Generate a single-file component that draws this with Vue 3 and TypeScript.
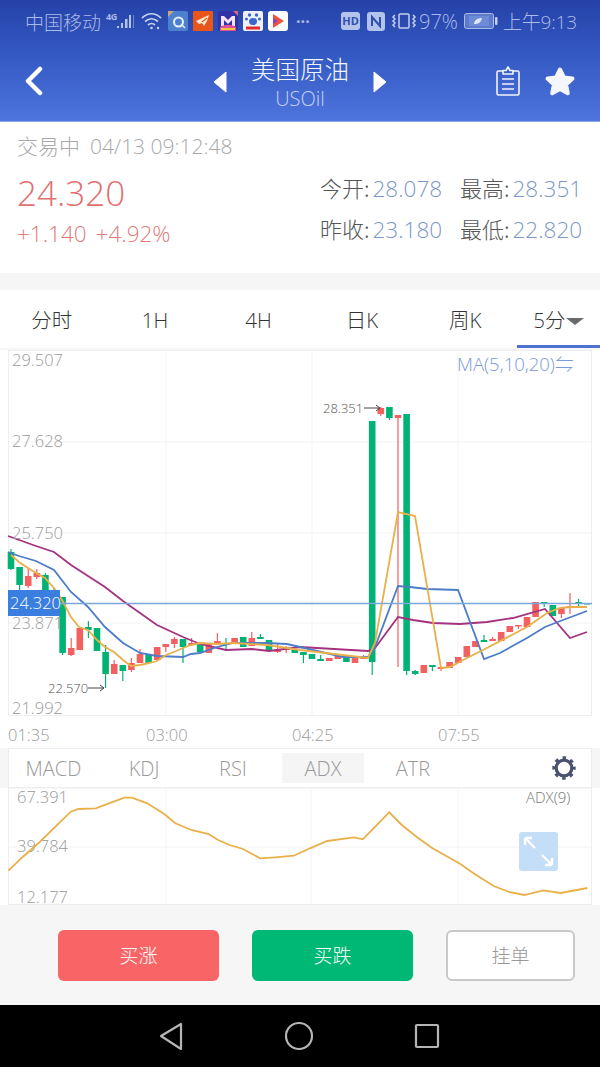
<script setup lang="ts">
type Pt = [number, number];
type Candle = { up: boolean; top: number; bottom: number; high: number; low: number };

// [up, body top, body bottom, wick high, wick low] traced from the chart
const raw: [number, number, number, number, number][] = [
  [0, 552, 569, 549, 570], [0, 567, 585, 567, 590], [1, 576, 586, 568, 588], [1, 573, 577, 569, 579],
  [0, 575, 592, 573, 594], [0, 590, 607, 588, 607], [0, 597, 653, 597, 655], [1, 648, 655, 638, 656],
  [1, 628, 650, 628, 650], [0, 627, 630, 621, 638], [0, 628, 651, 628, 651], [0, 652, 674, 645, 688],
  [1, 664, 674, 660, 674], [0, 665, 671, 665, 681], [1, 663, 670, 658, 672], [1, 654, 663, 649, 663],
  [0, 654, 663, 654, 663], [1, 647, 660, 647, 660], [1, 644, 647, 644, 652], [1, 639, 644, 637, 648],
  [0, 639, 647, 639, 663], [1, 643, 645, 638, 646], [0, 643, 652, 643, 652], [1, 643, 653, 643, 653],
  [1, 641, 643, 633, 644], [0, 643, 645, 638, 649], [1, 638, 644, 638, 644], [0, 637, 647, 637, 647],
  [1, 638, 646, 632, 646], [0, 637, 639, 634, 639], [0, 640, 651, 640, 651], [1, 650, 652, 643, 653],
  [1, 648, 650, 646, 653], [0, 649, 653, 649, 653],
  [0, 652, 655, 652, 663], [0, 654, 659, 654, 659], [0, 659, 661, 655, 661], [1, 658, 661, 658, 661],
  [1, 656, 659, 656, 659], [0, 656, 662, 656, 662], [1, 658, 663, 658, 663], [1, 657, 659, 655, 659],
  [0, 421, 662, 421, 675], [1, 408, 414, 407, 416], [0, 407, 418, 407, 420], [1, 415, 418, 415, 667],
  [0, 414, 671, 414, 675], [0, 671, 674, 670, 675], [1, 665, 673, 665, 673], [0, 665, 667, 665, 671],
  [1, 667, 669, 666, 671], [1, 662, 668, 662, 668], [1, 657, 663, 657, 663], [1, 646, 657, 646, 657],
  [1, 641, 647, 641, 647], [0, 640, 642, 635, 642], [1, 639, 641, 637, 641], [1, 632, 641, 632, 641],
  [1, 626, 632, 626, 632], [1, 625, 626, 625, 629], [1, 617, 627, 617, 627], [1, 602, 617, 602, 617],
  [0, 602, 604, 602, 607], [0, 605, 616, 605, 616], [1, 608, 614, 608, 618], [1, 606, 608, 593, 614],
  [0, 602, 603, 599, 606], [0, 603, 604, 603, 604],
];

const candles: (Candle & { x: number })[] = raw.map(([up, top, bottom, high, low], i) => ({
  x: 11 + 8.6 * i,
  up: up === 1,
  top,
  bottom,
  high,
  low,
}));

const line = (pts: Pt[]) => pts.map(([x, y]) => `${x.toFixed(1)},${y.toFixed(1)}`).join(' ');

const ma5 = line([
  [11, 555], [19, 562], [28, 568], [36, 573], [45, 578], [54, 588], [62, 600], [71, 617], [79, 627], [88, 630],
  [97, 640], [105, 647], [114, 652], [123, 660], [131, 666], [140, 665], [149, 663], [157, 661], [166, 655],
  [174, 652], [183, 648], [191, 645], [200, 643], [217, 644], [233, 643], [267, 645], [300, 650], [368, 658],
  [375, 643], [398, 512], [415, 516], [441, 668], [450, 667], [467, 658], [483, 650], [527, 627], [547, 613],
  [560, 608], [570, 607], [587, 607],
]);
const ma10 = line([
  [8, 552], [19, 556], [36, 561], [54, 570], [71, 592], [88, 607], [105, 627], [123, 643], [140, 653], [157, 656],
  [183, 657], [191, 654], [200, 653], [217, 647], [233, 643], [267, 643], [287, 644], [300, 647], [343, 657],
  [368, 657], [375, 647], [398, 586], [410, 587], [427, 589], [458, 590], [484, 659], [500, 653], [527, 638],
  [545, 627], [563, 620], [587, 611],
]);
const ma20 = line([
  [8, 536], [36, 546], [54, 552], [71, 565], [105, 587], [123, 601], [140, 613], [157, 625], [183, 637], [200, 644],
  [226, 650], [252, 649], [269, 651], [300, 647], [368, 651], [375, 648], [398, 617], [413, 620], [433, 623],
  [460, 624], [487, 622], [513, 618], [545, 609], [570, 638], [587, 632],
]);

const adx = line(
  ([
    [22, 452], [60, 410], [100, 370], [140, 325], [185, 275], [205, 267], [250, 265], [290, 248], [325, 233],
    [345, 233], [385, 250], [430, 283], [458, 310], [500, 330], [545, 342], [570, 360], [600, 375], [635, 387],
    [680, 415], [720, 412], [768, 407], [810, 385], [855, 363], [925, 352], [948, 358], [1017, 277], [1050, 315],
    [1090, 352], [1130, 385], [1200, 430], [1240, 462], [1290, 498], [1330, 516], [1370, 525], [1420, 511],
    [1465, 519], [1535, 504],
  ] as Pt[]).map(([x, y]): Pt => [x / 2.613, 720 + y / 3]),
);

const priceScale = [
  { y: 366, label: '29.507' },
  { y: 447, label: '27.628' },
  { y: 539, label: '25.750' },
  { y: 629, label: '23.871' },
  { y: 714, label: '21.992' },
];
const timeScale = [
  { x: 8, label: '01:35' },
  { x: 146, label: '03:00' },
  { x: 292, label: '04:25' },
  { x: 438, label: '07:55' },
];
const tabs = ['分时', '1H', '4H', '日K', '周K'];
const indicators = [
  { name: 'MACD', width: 89 },
  { name: 'KDJ', width: 92 },
  { name: 'RSI', width: 86 },
  { name: 'ADX', width: 82, active: true },
  { name: 'ATR', width: 98 },
];
</script>

<template>
  <div class="page">
    <header class="top">
      <div class="status">
        <span class="carrier">中国移动</span>
        <span class="net">4G</span>
        <svg class="signal" width="18" height="20" viewBox="0 0 18 20">
          <g fill="#b4c3ec">
            <rect x="0" y="15" width="2" height="2" />
            <rect x="4" y="12" width="2" height="5" />
            <rect x="8" y="8" width="2.500" height="9" />
            <rect x="12" y="4" width="2" height="13" />
            <rect x="16" y="4" width="1" height="13" opacity=".5" />
          </g>
        </svg>
        <svg class="wifi" width="22" height="20" viewBox="0 0 22 20" fill="none" stroke="#c4d0f0" stroke-width="1.700">
          <path d="M1 7c6-5.500 13-5.500 19 0M4 10.500c4-3.500 9-3.500 13 0M7 14c2-1.800 5-1.800 7 0" />
          <circle cx="10.500" cy="17" r="1.300" fill="#c4d0f0" stroke="none" />
          <circle cx="17" cy="17" r="1.200" fill="#c4d0f0" stroke="none" />
        </svg>
        <svg class="app" width="20" height="20" viewBox="0 0 20 20">
          <rect width="20" height="20" rx="2" fill="#4d80cf" />
          <circle cx="10.500" cy="11" r="4.500" fill="none" stroke="#e6f2fb" stroke-width="2" />
          <path d="M13 13l4 4" stroke="#e6f2fb" stroke-width="1.500" />
          <path d="M0 0h6L0 6z" fill="#c9a77d" />
        </svg>
        <svg class="app" width="20" height="20" viewBox="0 0 20 20">
          <rect width="20" height="20" rx="1" fill="#e8561c" />
          <path d="M3 10l13-6-2 6-3 5-2-3-3 1z" fill="#fde9d6" />
          <path d="M9 11l5-4" stroke="#e8561c" stroke-width="1.200" />
        </svg>
        <svg class="app" width="20" height="20" viewBox="0 0 20 20">
          <rect width="20" height="20" rx="2" fill="#3232a8" />
          <path d="M3 15V5l3 0 4 4 4-4 3 0v10h-3V9l-4 4-4-4v6z" fill="#f4e4f4" />
          <path d="M2 16c5-3 11-3 16 0v4H2z" fill="#e0509c" />
          <rect x="3" y="17" width="14" height="2" fill="#f2c53d" />
          <path d="M15 0h5v5z" fill="#d06a8a" />
        </svg>
        <svg class="app" width="20" height="20" viewBox="0 0 20 20">
          <rect width="20" height="20" rx="2" fill="#eef1fb" />
          <g fill="#3a66d0">
            <circle cx="6.500" cy="4" r="1.700" /><circle cx="13.500" cy="4" r="1.700" />
            <circle cx="3.500" cy="8" r="1.500" /><circle cx="16.500" cy="8" r="1.500" />
            <ellipse cx="10" cy="10.500" rx="4" ry="3.500" />
          </g>
          <rect x="3" y="15.500" width="14" height="3" fill="#e02c2c" />
        </svg>
        <svg class="app" width="20" height="20" viewBox="0 0 20 20">
          <rect width="20" height="20" rx="3" fill="#fff" />
          <path d="M5 3l11 7-11 7z" fill="#f0533c" />
          <path d="M5 7l5 3-5 3z" fill="#8a3fd0" />
        </svg>
        <span class="dots">···</span>
        <span class="status-gap" />
        <span class="hd">HD</span>
        <svg class="nfc" width="18" height="19" viewBox="0 0 18 19">
          <rect width="18" height="19" rx="3" fill="#b4c3ec" />
          <path d="M5 14V5l8 9V5" fill="none" stroke="#2f4fb0" stroke-width="2" />
        </svg>
        <svg class="vibrate" width="26" height="18" viewBox="0 0 26 18" fill="none" stroke="#c4d0f0" stroke-width="1.500">
          <rect x="8" y="2" width="10" height="14" rx="1" />
          <path d="M4 3l-2 2 2 2-2 2 2 2-2 2 2 2M22 3l2 2-2 2 2 2-2 2 2 2-2 2" />
        </svg>
        <span class="level">97%</span>
        <svg class="battery" width="34" height="16" viewBox="0 0 34 16">
          <rect x=".5" y=".5" width="29" height="15" rx="2" fill="#5d7acb" stroke="#a9b9e8" />
          <rect x="5" y="3" width="20" height="10" fill="#6f8ad6" />
          <rect x="31" y="4" width="2.500" height="8" rx="1" fill="#c4d0f0" />
          <path d="M10 11c0-4 4-6 8-6-1 4-3 6-8 6z" fill="#dfe6f8" />
        </svg>
        <span class="clock">上午9:13</span>
      </div>
      <div class="nav">
        <svg class="back" width="20" height="30" viewBox="0 0 20 30">
          <path d="M16 3L4 15l12 12" fill="none" stroke="#fff" stroke-width="4.500" stroke-linecap="round" stroke-linejoin="round" />
        </svg>
        <div class="title-row">
          <svg width="14" height="22" viewBox="0 0 14 22"><path d="M13 1v20L1 11z" fill="#fff" stroke="#fff" stroke-linejoin="round" /></svg>
          <div class="title">
            <div class="title-cn">美国原油</div>
            <div class="title-en">USOil</div>
          </div>
          <svg width="14" height="22" viewBox="0 0 14 22"><path d="M1 1v20l12-10z" fill="#fff" stroke="#fff" stroke-linejoin="round" /></svg>
        </div>
        <div class="nav-actions">
          <svg width="26" height="30" viewBox="0 0 26 30" fill="none" stroke="#f0f4fd" stroke-width="1.600">
            <path d="M8 5H3.500A1.500 1.500 0 0 0 2 6.500v21A1.500 1.500 0 0 0 3.500 29h19a1.500 1.500 0 0 0 1.500-1.500v-21A1.500 1.500 0 0 0 22.500 5H18" />
            <path d="M8 8V4.500h3L13 1l2 3.500h3V8zM7 13h12M7 18h12M7 23h12" stroke-linejoin="round" />
          </svg>
          <svg width="32" height="31" viewBox="0 0 32 31">
            <path d="M16 3.500l3.900 8 8.600 1.100-6.400 6 1.700 8.700L16 23l-7.800 4.300 1.700-8.700-6.400-6 8.600-1.100z" fill="#f4f6fc" stroke="#f4f6fc" stroke-width="4" stroke-linejoin="round" />
          </svg>
        </div>
      </div>
    </header>

    <section class="quote">
      <div class="quote-time"><span>交易中</span><span>04/13 09:12:48</span></div>
      <div class="quote-body">
        <div class="quote-price">
          <div class="price">24.320</div>
          <div class="change"><span>+1.140</span><span>+4.92%</span></div>
        </div>
        <div class="stats">
          <div class="stat"><span class="stat-name">今开:</span><span class="stat-value">28.078</span></div>
          <div class="stat"><span class="stat-name">最高:</span><span class="stat-value">28.351</span></div>
          <div class="stat"><span class="stat-name">昨收:</span><span class="stat-value">23.180</span></div>
          <div class="stat"><span class="stat-name">最低:</span><span class="stat-value">22.820</span></div>
        </div>
      </div>
    </section>

    <nav class="tabs">
      <div v-for="tab in tabs" :key="tab" class="tab">{{ tab }}</div>
      <div class="tab tab-active">5分<i class="caret" /></div>
    </nav>

    <svg class="chart" width="600" height="398" viewBox="0 350 600 398">
      <rect x="8.500" y="350.500" width="583" height="365" fill="#fff" stroke="#eeeeee" />
      <g stroke="#f3f3f3">
        <path d="M166 351v364M312 351v364M458 351v364M9 442h582M9 533h582M9 623h582" />
      </g>
      <g v-for="c in candles" :key="c.x" :fill="c.up ? '#f2605f' : '#00b274'">
        <rect :x="c.x - 0.6" :y="c.high" width="1.200" :height="c.low - c.high" />
        <rect :x="c.x - 3.300" :y="c.top" width="6.600" :height="Math.max(c.bottom - c.top, 1.500)" />
      </g>
      <polyline :points="ma20" class="ma" stroke="#a5327f" />
      <polyline :points="ma10" class="ma" stroke="#4d7cc9" />
      <polyline :points="ma5" class="ma" stroke="#e9b04a" />
      <text v-for="p in priceScale" :key="p.label" x="12" :y="p.y" class="scale">{{ p.label }}</text>
      <path d="M60 603.500h532" stroke="#7ba6d8" stroke-width="1.300" />
      <rect x="8" y="590" width="52" height="26" fill="#3a7fe0" />
      <text x="10" y="609" class="tag">24.320</text>
      <text x="457" y="371" class="ma-label">MA(5,10,20)⇋</text>
      <text x="323" y="413" class="mark">28.351</text>
      <path d="M364 408h16m-4-3l4 3-4 3" fill="none" stroke="#444" stroke-width="1" />
      <text x="48" y="693" class="mark">22.570</text>
      <path d="M88 688h16m-4-3l4 3-4 3" fill="none" stroke="#444" stroke-width="1" />
      <text v-for="t in timeScale" :key="t.label" :x="t.x" y="741" class="scale">{{ t.label }}</text>
    </svg>

    <div class="indicators">
      <div
        v-for="item in indicators"
        :key="item.name"
        class="indicator"
        :class="{ 'indicator-active': item.active }"
        :style="{ width: `${item.width}px` }"
      >
        {{ item.name }}
      </div>
      <svg class="gear" width="26" height="26" viewBox="0 0 26 26" fill="none" stroke="#4b5270">
        <circle cx="13" cy="13" r="7.800" stroke-width="3.200" />
        <circle cx="13" cy="13" r="10.300" stroke-width="2.800" stroke-dasharray="3.600 4.490" stroke-dashoffset="1.800" />
      </svg>
    </div>

    <div class="adx">
      <svg width="600" height="117" viewBox="0 788 600 117">
        <rect x="8.500" y="788" width="583" height="116.500" fill="#fff" stroke="#eeeeee" />
        <path d="M166 788v116M311 788v116M458 788v116M9 847h582" stroke="#f3f3f3" />
        <text x="17" y="803" class="scale">67.391</text>
        <text x="17" y="852" class="scale">39.784</text>
        <text x="17" y="903" class="scale">12.177</text>
        <polyline :points="adx" class="adx-line" />
        <text x="526" y="803" class="adx-label">ADX(9)</text>
        <rect x="519" y="832" width="39" height="39" rx="3" fill="#c5def8" />
        <path d="M525 838l10 10m-10-10v7m0-7h7M552 865l-10-10m10 10v-7m0 7h-7" fill="none" stroke="#fff" stroke-width="2.400" />
      </svg>
    </div>

    <div class="actions">
      <button class="btn btn-up">买涨</button>
      <button class="btn btn-down">买跌</button>
      <button class="btn btn-order">挂单</button>
    </div>

    <footer class="system-nav">
      <svg width="26" height="30" viewBox="0 0 26 30" fill="none" stroke="#b5b5b5" stroke-width="2.200" stroke-linejoin="round">
        <path d="M23 3v25L3 15z" />
      </svg>
      <svg width="30" height="30" viewBox="0 0 30 30" fill="none" stroke="#b5b5b5" stroke-width="2.200"><circle cx="15" cy="15" r="13" /></svg>
      <svg width="26" height="26" viewBox="0 0 26 26" fill="none" stroke="#b5b5b5" stroke-width="2.200" stroke-linejoin="round"><rect x="2" y="2" width="22" height="22" rx="1" /></svg>
    </footer>
  </div>
</template>

<style scoped>
.page {
  width: 600px;
  height: 1067px;
  overflow: hidden;
  background: #f6f6f6;
  font-family: "Open Sans", "Noto Sans CJK SC", sans-serif;
  font-weight: 300;
}

.top {
  height: 122px;
  background: linear-gradient(180deg, #2542a8 0%, #3459c2 45%, #4e74de 100%);
  box-shadow: inset 0 -1px #8ea6ea;
}

.status {
  display: flex;
  align-items: center;
  height: 42px;
  padding-left: 25px;
  color: #a9b9e8;
  font-size: 19px;
  white-space: nowrap;
}

.carrier {
  width: 78px;
  font-family: "Noto Sans CJK SC", sans-serif;
}

.net {
  width: 10px;
  margin: -10px 0 0 3px;
  font-size: 9px;
  font-weight: 700;
  letter-spacing: -0.5px;
}

.signal {
  margin-left: 1px;
  flex-shrink: 0;
}

.wifi {
  margin-left: 6px;
  flex-shrink: 0;
}

.app {
  margin-left: 5px;
  flex-shrink: 0;
}

.dots {
  margin-left: 8px;
  font-size: 16px;
  font-weight: 700;
}

.status-gap {
  flex: 1;
}

.hd {
  width: 19px;
  height: 18px;
  border-radius: 3px;
  background: #b4c3ec;
  color: #2f4fb0;
  font-size: 11px;
  font-weight: 700;
  line-height: 18px;
  text-align: center;
}

.nfc {
  margin-left: 7px;
  flex-shrink: 0;
}

.vibrate {
  margin-left: 6px;
  flex-shrink: 0;
}

.level {
  width: 39px;
  margin-left: 2px;
  color: #a9b9e8;
  font-size: 20px;
}

.battery {
  margin-left: 6px;
  flex-shrink: 0;
}

.clock {
  width: 78px;
  margin-left: 5px;
  margin-right: 19px;
  font-size: 19px;
  letter-spacing: -0.2px;
}

.nav {
  display: grid;
  grid-template-columns: 1fr auto 1fr;
  align-items: center;
  height: 80px;
  padding: 0 24px;
}

.back {
  display: block;
  margin-top: -2px;
}

.title-row {
  display: flex;
  align-items: center;
  gap: 23px;
}

.title {
  width: 100px;
  text-align: center;
  margin-top: -3px;
}

.title-cn {
  color: #f2f5fd;
  font-family: "Noto Sans CJK SC", sans-serif;
  font-size: 24.500px;
  line-height: 36px;
}

.title-en {
  color: #c5d3f3;
  font-size: 20px;
  line-height: 24px;
}

.nav-actions {
  display: flex;
  justify-content: flex-end;
  align-items: center;
  gap: 23px;
  margin-top: -2px;
}

.quote {
  box-sizing: border-box;
  height: 151px;
  padding: 10px 17px 0;
  background: #fff;
}

.quote-time {
  display: flex;
  gap: 10px;
  color: #a8a8a8;
  font-size: 21px;
  line-height: 28px;
}

.quote-body {
  display: flex;
  justify-content: space-between;
  margin-top: 9px;
}

.price {
  color: #e16f6f;
  font-size: 35px;
  line-height: 48px;
}

.change {
  display: flex;
  gap: 9px;
  margin-top: 1px;
  color: #e07a7a;
  font-size: 22.500px;
  line-height: 32px;
}

.stats {
  display: grid;
  grid-template-columns: 140px 123px;
  align-self: flex-start;
  row-gap: 7px;
  margin-top: 2px;
}

.stat {
  white-space: nowrap;
  font-size: 22px;
  line-height: 32px;
}

.stat-name {
  margin-right: 3px;
  color: #555;
  font-family: "Noto Sans CJK SC", sans-serif;
}

.stat-value {
  color: #7c96c9;
  font-size: 22.500px;
}

.tabs {
  display: grid;
  grid-template-columns: repeat(5, 103.400px) 83px;
  height: 58px;
  margin-top: 17px;
  background: #fff;
}

.tab {
  box-sizing: border-box;
  height: 58px;
  color: #333;
  font-size: 20.500px;
  line-height: 60px;
  text-align: center;
}

.tab-active {
  border-bottom: 3px solid #4d72d0;
  white-space: nowrap;
}

.caret {
  display: inline-block;
  margin-left: 0;
  vertical-align: 3px;
  border: 9px solid transparent;
  border-top: 7px solid #6a6a6a;
  border-bottom: 0;
}

.chart {
  display: block;
  margin-top: 2px;
  background: #fff;
}

.ma {
  fill: none;
  stroke-width: 1.800;
}

.scale {
  fill: #9a9a9a;
  font-size: 16.500px;
}

.tag {
  fill: #fff;
  font-size: 16.500px;
}

.ma-label {
  fill: #7a9bd8;
  font-size: 18.500px;
}

.mark {
  fill: #555;
  font-size: 13px;
}

.indicators {
  box-sizing: border-box;
  display: flex;
  align-items: center;
  height: 40px;
  margin: 0 8px;
  border: 1px solid #eeeeee;
  background: #fff;
}

.indicator {
  height: 30px;
  color: #999;
  font-size: 20px;
  line-height: 32px;
  text-align: center;
}

.indicator-active {
  margin-left: 6px;
  background: #f5f5f5;
}

.gear {
  margin-left: auto;
  margin-right: 14px;
}

.adx {
  height: 117px;
  background: #fff;
}

.adx svg {
  display: block;
}

.adx-line {
  fill: none;
  stroke: #e9b04a;
  stroke-width: 1.800;
}

.adx-label {
  fill: #777;
  font-size: 15px;
}

.actions {
  display: flex;
  align-items: center;
  height: 100px;
  padding: 0 25px 0 58px;
}

.btn {
  box-sizing: border-box;
  height: 51px;
  margin: 0;
  padding: 0 0 2px;
  border: 0;
  border-radius: 6px;
  color: #fff;
  font-family: "Noto Sans CJK SC", sans-serif;
  font-size: 19px;
  font-weight: 300;
}

.btn-up {
  width: 161px;
  background: #f96566;
}

.btn-down {
  width: 161px;
  margin-left: 33px;
  background: #00b875;
}

.btn-order {
  width: 129px;
  margin-left: 33px;
  border: 2px solid #c9c9c9;
  background: #fff;
  color: #999;
}

.system-nav {
  display: flex;
  align-items: center;
  height: 62px;
  padding-left: 158px;
  gap: 100px;
  background: #000;
}
</style>
